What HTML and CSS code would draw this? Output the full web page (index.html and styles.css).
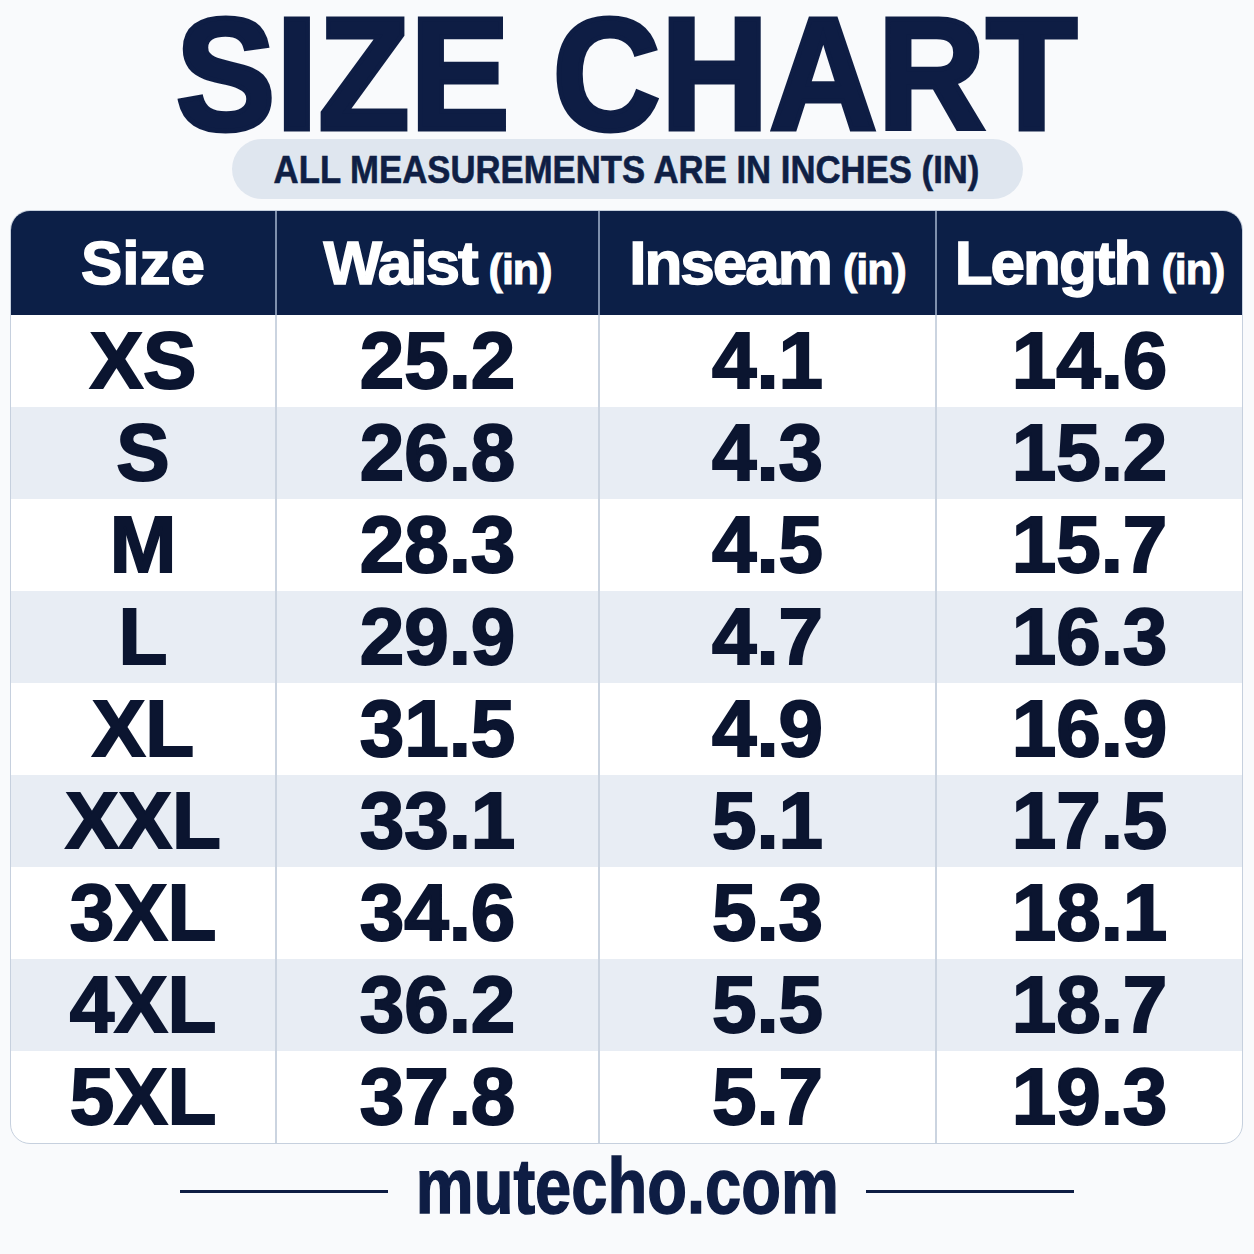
FILE: index.html
```html
<!DOCTYPE html>
<html lang="en">
<head>
<meta charset="utf-8">
<title>Size Chart</title>
<link rel="stylesheet" href="styles.css">
</head>
<body>
<main class="page">
  <h1 class="title"><span class="title-text">SIZE CHART</span></h1>
  <div class="pill"><span class="pill-text">ALL MEASUREMENTS ARE IN INCHES (IN)</span></div>

  <section class="chart">
    <div class="row head">
      <div class="cell">Size</div>
      <div class="cell">Waist <small>(in)</small></div>
      <div class="cell">Inseam <small>(in)</small></div>
      <div class="cell">Length <small>(in)</small></div>
    </div>
    <div class="row"><div class="cell">XS</div><div class="cell">25.2</div><div class="cell">4.1</div><div class="cell">14.6</div></div>
    <div class="row alt"><div class="cell">S</div><div class="cell">26.8</div><div class="cell">4.3</div><div class="cell">15.2</div></div>
    <div class="row"><div class="cell">M</div><div class="cell">28.3</div><div class="cell">4.5</div><div class="cell">15.7</div></div>
    <div class="row alt"><div class="cell">L</div><div class="cell">29.9</div><div class="cell">4.7</div><div class="cell">16.3</div></div>
    <div class="row"><div class="cell">XL</div><div class="cell">31.5</div><div class="cell">4.9</div><div class="cell">16.9</div></div>
    <div class="row alt"><div class="cell">XXL</div><div class="cell">33.1</div><div class="cell">5.1</div><div class="cell">17.5</div></div>
    <div class="row"><div class="cell">3XL</div><div class="cell">34.6</div><div class="cell">5.3</div><div class="cell">18.1</div></div>
    <div class="row alt"><div class="cell">4XL</div><div class="cell">36.2</div><div class="cell">5.5</div><div class="cell">18.7</div></div>
    <div class="row"><div class="cell">5XL</div><div class="cell">37.8</div><div class="cell">5.7</div><div class="cell">19.3</div></div>
  </section>

  <footer class="brand">
    <span class="rule"></span>
    <span class="site">mutecho.com</span>
    <span class="rule"></span>
  </footer>
</main>
</body>
</html>
```

FILE: styles.css
```css
* { box-sizing: border-box; }

html, body {
  margin: 0;
  padding: 0;
  background: #f9fafc;
}

body {
  font-family: "Liberation Sans", Arial, sans-serif;
  font-weight: 700;
  color: #0b1530;
}

.page {
  width: 1254px;
  height: 1254px;
  display: flex;
  flex-direction: column;
}

.title {
  margin: 0;
  padding-top: 8px;
  height: 139px;
  font-size: 160px;
  line-height: 131px;
  text-align: center;
  color: #0e1d44;
  font-weight: 700;
}

.title-text {
  display: inline-block;
  transform: scaleX(0.93);
  -webkit-text-stroke: 5px #0e1d44;
  letter-spacing: 1px;
}

.pill {
  width: 791px;
  height: 60px;
  margin: 0 auto;
  border-radius: 30px;
  background: #dfe6ef;
  display: flex;
  align-items: center;
  justify-content: center;
}

.pill-text {
  display: inline-block;
  font-size: 39px;
  line-height: 1;
  color: #0f1f45;
  transform: scaleX(0.89);
  white-space: nowrap;
  -webkit-text-stroke: 0.6px #0f1f45;
}

.chart {
  margin: 11px 11px 0 10px;
  border: 1px solid #c6d0de;
  border-radius: 20px;
  overflow: hidden;
  background: #ffffff;
}

.row {
  display: grid;
  grid-template-columns: 264px 323px 337px 1fr;
  height: 92px;
}

.row.alt {
  background: #e8edf4;
}

.cell {
  display: flex;
  align-items: center;
  justify-content: center;
  font-size: 80px;
  line-height: 92px;
  color: #0b1530;
  -webkit-text-stroke: 2px #0b1530;
  white-space: nowrap;
}

.cell + .cell {
  border-left: 2px solid #cbd4e0;
}

.row.head {
  height: 104px;
  background: #0c1f47;
}

.row.head .cell {
  font-size: 62px;
  line-height: 104px;
  color: #ffffff;
  -webkit-text-stroke: 1.5px #ffffff;
  letter-spacing: -2px;
  align-items: baseline;
}

.row.head .cell:first-child {
  letter-spacing: 0;
}

.row.head .cell + .cell {
  border-left: 2px solid #7f90ad;
}

.row.head small {
  font-size: 43px;
  margin-left: 12px;
  letter-spacing: -1px;
  -webkit-text-stroke: 1px #ffffff;
}

.brand {
  margin-top: 12px;
  height: 60px;
  display: flex;
  align-items: center;
  justify-content: center;
  gap: 28px;
}

.rule {
  width: 208px;
  height: 3px;
  margin-top: 10px;
  background: #0e1d44;
}

.site {
  display: inline-block;
  font-size: 77px;
  line-height: 60px;
  color: #0e1d44;
  transform: scaleX(0.845);
  margin: 0 -39px;
  -webkit-text-stroke: 1.5px #0e1d44;
}
```
